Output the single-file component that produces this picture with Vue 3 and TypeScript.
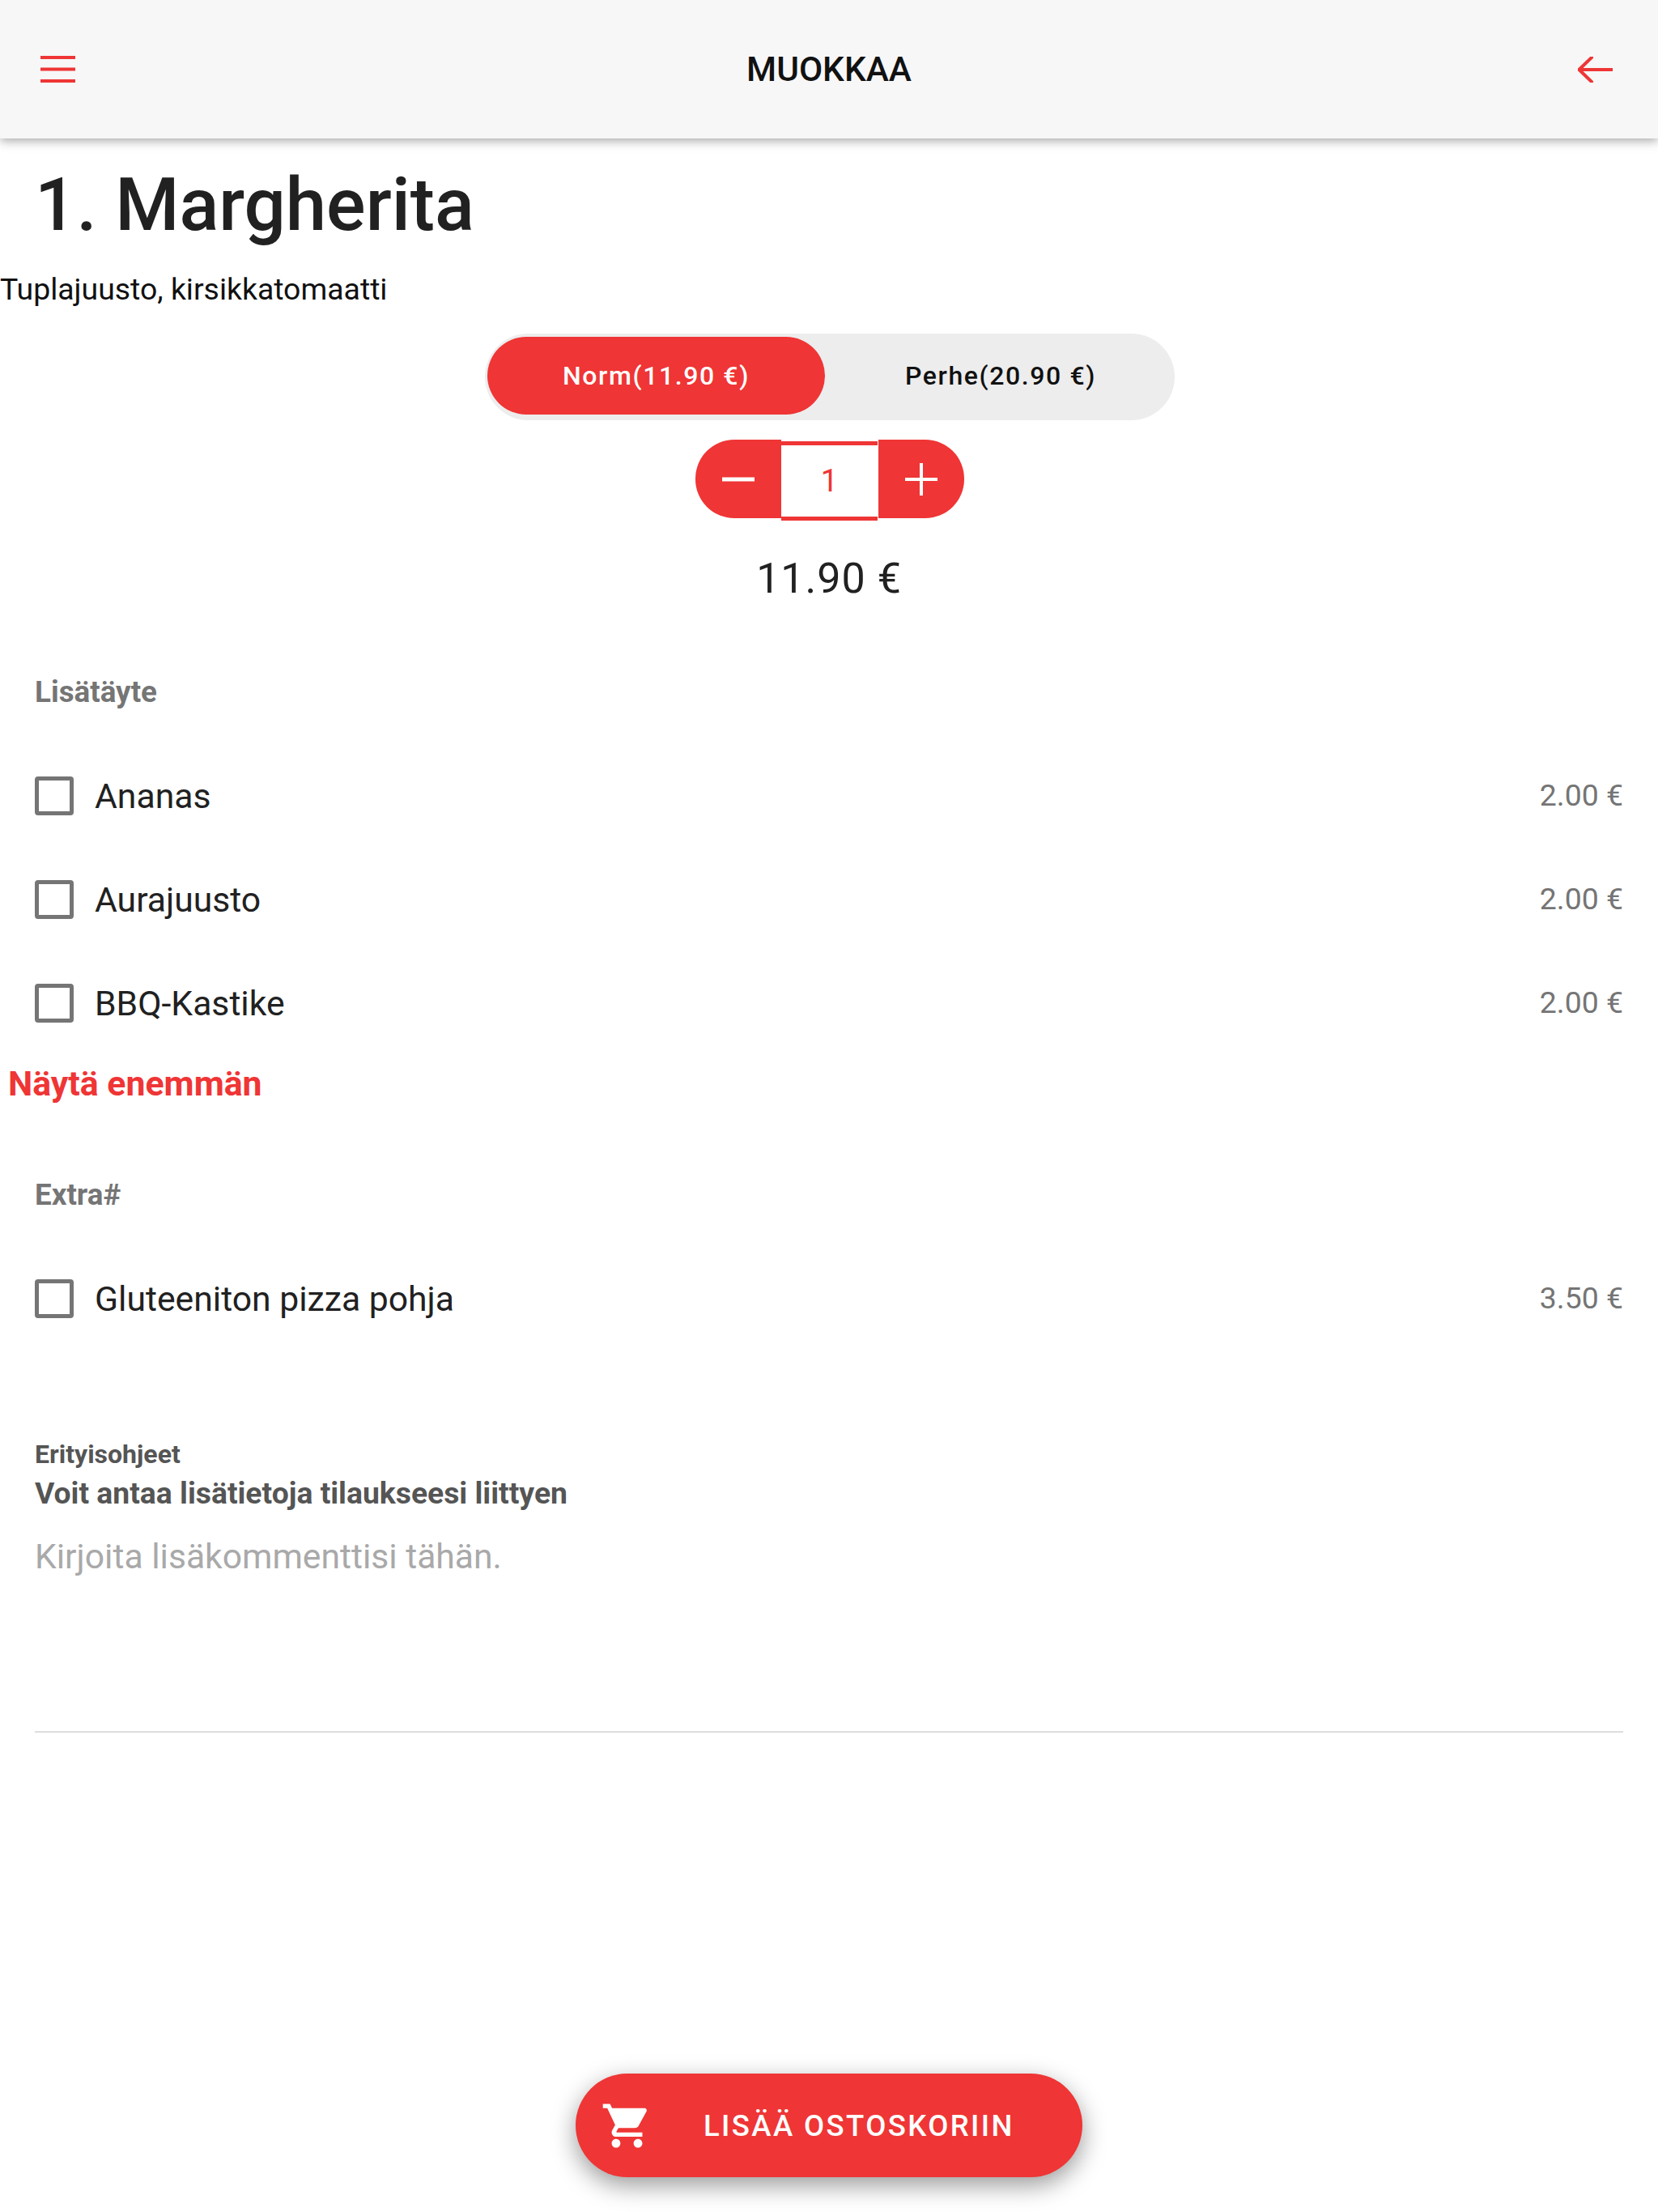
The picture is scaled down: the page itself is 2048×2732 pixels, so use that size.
<script setup lang="ts">
interface Extra { name: string; price: string }
const toppings: Extra[] = [
  { name: 'Ananas', price: '2.00 €' },
  { name: 'Aurajuusto', price: '2.00 €' },
  { name: 'BBQ-Kastike', price: '2.00 €' },
]
const extras: Extra[] = [{ name: 'Gluteeniton pizza pohja', price: '3.50 €' }]
</script>

<template>
  <div class="page">
    <header class="topbar">
      <svg class="menu" viewBox="0 0 43 33" width="43" height="33">
        <path d="M0 2h43M0 16.5h43M0 31h43" stroke="#ef3535" stroke-width="4" fill="none" />
      </svg>
      <div class="bar-title">MUOKKAA</div>
      <svg class="back" viewBox="0 0 43 32" width="43" height="32">
        <path d="M43 16H1.5M17 1L1.5 16 17 31" stroke="#ef3535" stroke-width="4" fill="none" stroke-linecap="round" stroke-linejoin="round" />
      </svg>
    </header>

    <h1 class="title">1. Margherita</h1>
    <p class="desc">Tuplajuusto, kirsikkatomaatti</p>

    <div class="toggle">
      <div class="opt on">Norm(11.90 €)</div>
      <div class="opt">Perhe(20.90 €)</div>
    </div>

    <div class="stepper">
      <div class="step left">
        <svg viewBox="0 0 40 40" width="40" height="40"><path d="M0 20h40" stroke="#fff" stroke-width="5" /></svg>
      </div>
      <div class="qty">1</div>
      <div class="step right">
        <svg viewBox="0 0 40 40" width="40" height="40"><path d="M0 20h40M20 0v40" stroke="#fff" stroke-width="4" /></svg>
      </div>
    </div>

    <div class="price">11.90 €</div>

    <div class="group">Lisätäyte</div>
    <div class="rows">
      <div v-for="t in toppings" :key="t.name" class="row">
        <span class="box"></span>
        <span class="name">{{ t.name }}</span>
        <span class="amount">{{ t.price }}</span>
      </div>
    </div>
    <div class="more">Näytä enemmän</div>

    <div class="group extra">Extra#</div>
    <div class="rows">
      <div v-for="t in extras" :key="t.name" class="row">
        <span class="box"></span>
        <span class="name">{{ t.name }}</span>
        <span class="amount">{{ t.price }}</span>
      </div>
    </div>

    <div class="note-label">Erityisohjeet</div>
    <div class="note-help">Voit antaa lisätietoja tilaukseesi liittyen</div>
    <div class="note-input">Kirjoita lisäkommenttisi tähän.</div>
    <div class="rule"></div>

    <footer class="footer">
      <button class="cart" type="button">
        <svg class="cart-icon" viewBox="0 0 24 24" width="65" height="65">
          <path fill="#fff" d="M7 18c-1.1 0-1.99.9-1.99 2S5.9 22 7 22s2-.9 2-2-.9-2-2-2zM1 2v2h2l3.6 7.59-1.35 2.45c-.16.28-.25.61-.25.96 0 1.1.9 2 2 2h12v-2H7.42c-.14 0-.25-.11-.25-.25l.03-.12.9-1.63h7.45c.75 0 1.41-.41 1.75-1.03l3.58-6.49c.08-.14.12-.31.12-.48 0-.55-.45-1-1-1H5.21l-.94-2H1zm16 16c-1.1 0-1.99.9-1.99 2s.89 2 1.99 2 2-.9 2-2-.9-2-2-2z" />
        </svg>
        <span class="cart-text">LISÄÄ OSTOSKORIIN</span>
      </button>
    </footer>
  </div>
</template>

<style scoped>
.page {
  display: flex;
  flex-direction: column;
  width: 2048px;
  min-height: 2732px;
  background: #fff;
  font-family: Roboto, "Liberation Sans", sans-serif;
  color: #212121;
}
.topbar {
  display: grid;
  grid-template-columns: 1fr auto 1fr;
  align-items: center;
  height: 171px;
  padding: 0 56px 0 50px;
  box-sizing: border-box;
  background: #f7f7f7;
  box-shadow: 0 3px 12px rgba(0, 0, 0, 0.35);
}
.back {
  justify-self: end;
}
.bar-title {
  position: relative;
  left: 3px;
  font-size: 42.4px;
  font-weight: 500;
  color: #111;
}
.title {
  margin: 17px 0 0 43px;
  height: 130px;
  font-size: 90.6px;
  line-height: 130px;
  font-weight: 500;
  color: #212121;
}
.desc {
  margin: 14px 0 0;
  font-size: 37.4px;
  line-height: 50px;
  color: #111;
}
.toggle {
  align-self: center;
  display: grid;
  grid-template-columns: 417px 429px;
  width: 852px;
  height: 107px;
  margin-top: 30px;
  margin-left: 2px;
  padding: 4px 3px 7px;
  box-sizing: border-box;
  border-radius: 54px;
  background: #ededed;
}
.opt {
  display: flex;
  align-items: center;
  justify-content: center;
  border-radius: 48px;
  font-size: 32px;
  font-weight: 500;
  letter-spacing: 1.6px;
  color: #111;
}
.opt:not(.on) {
  padding-left: 5px;
}
.opt.on {
  background: #ef3535;
  color: #fff;
}
.stepper {
  align-self: center;
  display: flex;
  height: 97px;
  margin-top: 24px;
  margin-left: 2px;
}
.step {
  display: flex;
  align-items: center;
  width: 106px;
  background: #ef3535;
}
.step.left {
  justify-content: flex-start;
  padding-left: 33px;
  box-sizing: border-box;
  border-radius: 48px 0 0 48px;
}
.step.right {
  justify-content: flex-end;
  padding-right: 33px;
  box-sizing: border-box;
  border-radius: 0 48px 48px 0;
  margin-left: 1px;
}
.qty {
  display: flex;
  align-items: center;
  justify-content: center;
  width: 119px;
  box-sizing: border-box;
  border-top: 5px solid #ef3535;
  border-bottom: 5px solid #ef3535;
  margin-top: 2px;
  height: 98px;
  font-size: 38px;
  color: #ef3535;
}
.price {
  margin-top: 45px;
  text-align: center;
  font-size: 52px;
  line-height: 60px;
  letter-spacing: 1px;
  color: #212121;
}
.group {
  margin: 90px 0 0 43px;
  font-size: 36.8px;
  line-height: 40px;
  font-weight: 700;
  color: #757575;
}
.group.extra {
  margin-top: 93px;
}
.rows {
  margin: 44px 43px 0;
}
.row {
  display: flex;
  align-items: center;
  height: 128px;
}
.box {
  flex: none;
  width: 48px;
  height: 48px;
  box-sizing: border-box;
  border: 5.5px solid #757575;
  border-radius: 4px;
}
.name {
  flex: 1;
  margin-left: 26px;
  font-size: 42.7px;
  color: #212121;
}
.amount {
  padding-bottom: 2px;
  font-size: 37.4px;
  color: #757575;
}
.more {
  margin: 10px 0 0 10px;
  font-size: 42.8px;
  line-height: 50px;
  font-weight: 700;
  color: #ef3535;
}
.note-label {
  margin: 108px 0 0 43px;
  font-size: 32px;
  line-height: 40px;
  font-weight: 700;
  color: #555;
}
.note-help {
  margin: 6px 0 0 43px;
  font-size: 37.3px;
  line-height: 44px;
  font-weight: 700;
  color: #555;
}
.note-input {
  margin: 31px 0 0 43px;
  font-size: 42.65px;
  line-height: 50px;
  color: #a9a9a9;
}
.rule {
  height: 2px;
  margin: 191px 43px 0;
  background: #ddd;
}
.footer {
  display: flex;
  justify-content: center;
  margin-top: auto;
  padding-bottom: 43px;
}
.cart {
  display: flex;
  align-items: center;
  width: 626px;
  height: 128px;
  padding: 0 0 0 31px;
  box-sizing: border-box;
  border: none;
  border-radius: 64px;
  background: #ef3535;
  box-shadow: 0 10px 30px rgba(0, 0, 0, 0.4);
  font-family: inherit;
}
.cart-text {
  margin-left: 62px;
  font-size: 36.5px;
  font-weight: 500;
  letter-spacing: 2.4px;
  color: #fff;
}
</style>
